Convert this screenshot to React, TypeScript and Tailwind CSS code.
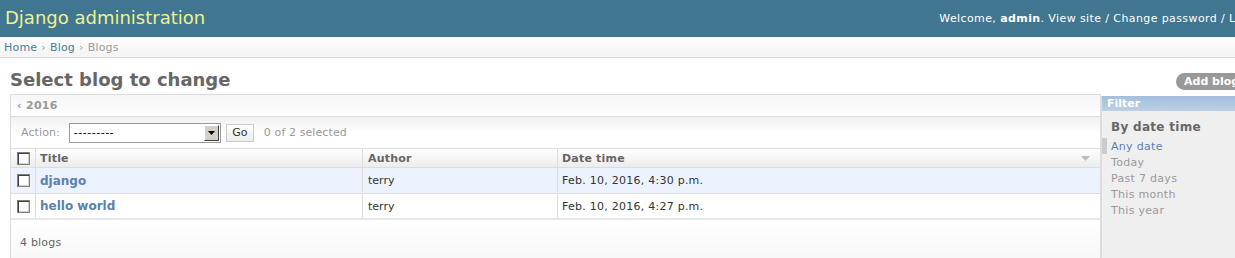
import React from "react";

const font = { fontFamily: '"DejaVu Sans", Verdana, sans-serif' };

function Checkbox() {
  return (
    <span className="inline-block w-[13px] h-[13px] border border-[#808080] bg-white shadow-[inset_1px_1px_0_#404040,inset_-1px_-1px_0_#d4d0c8]" />
  );
}

export default function App() {
  return (
    <div className="w-[1235px] h-[258px] overflow-hidden bg-white" style={font}>
      <div className="w-[1290px]">
        {/* Header */}
        <div className="h-[37px] bg-[#417690] flex items-center justify-between pl-[5px] pr-[10px]">
          <div className="text-[18px] text-[#f0f28e] leading-none pb-[2px]">Django administration</div>
          <div className="text-[11px] text-white leading-none pr-[7px] tracking-[0.4px]">
            Welcome, <b>admin</b>. View site / Change password / Log out
          </div>
        </div>
        {/* Breadcrumbs */}
        <div className="h-[21px] bg-gradient-to-b from-white to-[#f3f3f3] border-b border-[#d8d8d8] flex items-center pl-[4px] text-[11px] text-[#999] leading-none tracking-[0.2px]">
          <span className="text-[#447e9b]">Home</span>
          <span className="mx-[4px] text-[#999]">›</span>
          <span className="text-[#447e9b]">Blog</span>
          <span className="mx-[4px] text-[#999]">›</span>
          <span>Blogs</span>
        </div>
        {/* Content */}
        <div className="pl-[10px] flex">
          <div className="w-[1091px]">
            <div className="h-[36px] flex items-center">
              <h1 className="text-[18px] font-bold text-[#666] leading-none pt-[7px]">Select blog to change</h1>
            </div>
            <div className="border border-[#ddd] border-b-0">
              {/* date hierarchy */}
              <div className="h-[22px] bg-gradient-to-b from-[#f6f6f6] to-white border-b border-[#ddd] flex items-center pl-[6px] text-[11px] font-bold text-[#999] leading-none tracking-[0.3px]">
                ‹ 2016
              </div>
              {/* actions */}
              <div className="h-[32px] bg-gradient-to-b from-[#f0f0f0] via-white to-white border-b border-[#ddd] flex items-center pl-[10px] text-[11px] text-[#999] leading-none tracking-[0.1px]">
                <span>Action:</span>
                <div className="ml-[9px] w-[152px] h-[20px] border border-[#9a9a9a] bg-white flex items-center justify-between pl-[4px] pr-[1px] text-black">
                  <span className="tracking-[0.5px]">---------</span>
                  <span className="w-[15px] h-[16px] bg-[#d4d0c8] border border-t-white border-l-white border-r-[#404040] border-b-[#404040] flex items-center justify-center">
                    <svg width="7" height="4" viewBox="0 0 7 4"><path d="M0 0h7L3.5 4z" fill="#000" /></svg>
                  </span>
                </div>
                <span className="ml-[5px] h-[18px] w-[28px] border border-[#ccc] bg-gradient-to-b from-white to-[#ececec] flex items-center justify-center text-[#333]">Go</span>
                <span className="ml-[10px]">0 of 2 selected</span>
              </div>
              {/* table */}
              <div className="text-[11px] leading-none">
                <div className="h-[19px] flex bg-gradient-to-b from-white to-[#ececec] border-b border-[#ddd] font-bold text-[#666] tracking-[0.2px]">
                  <div className="w-[25px] flex items-center justify-center border-r border-[#ddd]"><Checkbox /></div>
                  <div className="w-[327px] flex items-center pl-[4px] border-r border-[#ddd]">Title</div>
                  <div className="w-[195px] flex items-center pl-[5px] border-r border-[#ddd]">Author</div>
                  <div className="flex-1 flex items-center justify-between pl-[4px] pr-[10px]">
                    <span>Date time</span>
                    <svg width="9" height="5" viewBox="0 0 9 5"><path d="M0 0h9L4.5 5z" fill="#bbb" /></svg>
                  </div>
                </div>
                <div className="h-[26px] flex bg-[#edf3fe] border-b border-[#ddd] text-[#333]">
                  <div className="w-[25px] flex items-center justify-center border-r border-[#ddd]"><Checkbox /></div>
                  <div className="w-[327px] flex items-center pl-[4px] border-r border-[#ddd] text-[12px] font-bold text-[#5b80b2]">django</div>
                  <div className="w-[195px] flex items-center pl-[5px] border-r border-[#ddd]">terry</div>
                  <div className="flex-1 flex items-center pl-[4px] tracking-[0.25px]">Feb. 10, 2016, 4:30 p.m.</div>
                </div>
                <div className="h-[26px] flex bg-white border-b-2 border-[#e8e8e8] text-[#333]">
                  <div className="w-[25px] flex items-center justify-center border-r border-[#ddd]"><Checkbox /></div>
                  <div className="w-[327px] flex items-center pl-[4px] border-r border-[#ddd] text-[12px] font-bold text-[#5b80b2]">hello world</div>
                  <div className="w-[195px] flex items-center pl-[5px] border-r border-[#ddd]">terry</div>
                  <div className="flex-1 flex items-center pl-[4px] tracking-[0.25px]">Feb. 10, 2016, 4:27 p.m.</div>
                </div>
              </div>
              <div className="h-[45px] bg-gradient-to-b from-white to-[#f6f6f6] flex items-center pl-[9px] text-[11px] text-[#666] leading-none tracking-[0.2px]">
                4 blogs
              </div>
            </div>
          </div>
          {/* right column */}
          <div className="flex-1 flex flex-col">
            <div className="h-[36px] flex items-end pb-[4px] pl-[75px]">
              <span className="h-[17px] px-[8px] rounded-full bg-[#999] text-white text-[11px] font-bold flex items-center leading-none">Add blog</span>
            </div>
            <div className="mt-[2px] flex-1 bg-[#efefef] border-l border-[#ddd] h-[162px]">
              <div className="h-[15px] bg-gradient-to-b from-[#a3bfdc] to-[#bcd0e6] text-white text-[11px] font-bold flex items-center pl-[5px] leading-none">Filter</div>
              <div className="pt-[10px] text-[11px] leading-none tracking-[0.3px]">
                <div className="pl-[9px] text-[12px] font-bold text-[#666] mb-[5px]">By date time</div>
                <div className="border-l-[5px] border-[#ccc] pl-[4px] text-[#5b80b2] h-[16px] flex items-center">Any date</div>
                <div className="pl-[9px] text-[#999] h-[16px] flex items-center">Today</div>
                <div className="pl-[9px] text-[#999] h-[16px] flex items-center">Past 7 days</div>
                <div className="pl-[9px] text-[#999] h-[16px] flex items-center">This month</div>
                <div className="pl-[9px] text-[#999] h-[16px] flex items-center">This year</div>
              </div>
            </div>
          </div>
        </div>
      </div>
    </div>
  );
}
